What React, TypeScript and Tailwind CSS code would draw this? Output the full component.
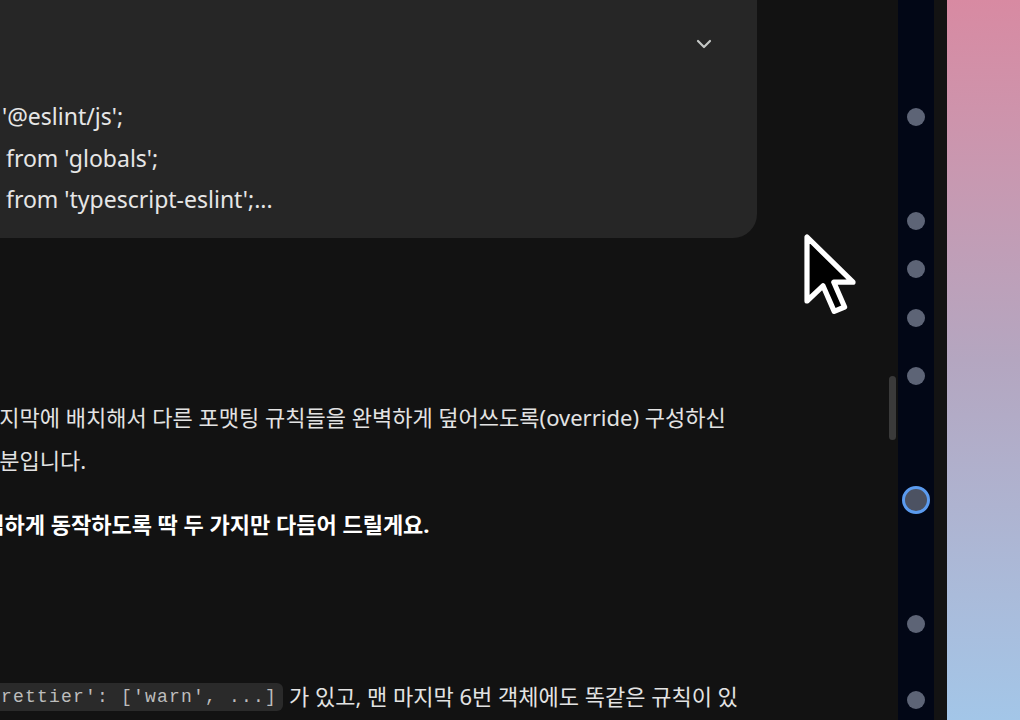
import { ChevronDown } from "lucide-react";

const sans = "font-['Noto_Sans','Noto_Sans_CJK_KR',sans-serif]";

const Dot = ({ className = "" }: { className?: string }) => (
  <div className={`h-[18px] w-[18px] shrink-0 rounded-full bg-[#5d6476] ${className}`} />
);

const Cursor = () => (
  <svg
    className="absolute left-[801px] top-[231px]"
    width="56"
    height="88"
    viewBox="-1.5 -1.5 14 22"
  >
    <path
      d="M0 0 L0 16 L4 12.2 L6.8 18.6 L9.4 17.5 L6.7 11.3 L11.5 11.3 Z"
      fill="#000"
      stroke="#fff"
      strokeWidth="1.3"
      strokeLinejoin="round"
    />
  </svg>
);

const CodeCard = () => (
  <section className="relative h-[238px] w-[757px] shrink-0 rounded-br-[24px] bg-[#262626]">
    <div className="flex h-[88px] items-center justify-end pr-[41px]">
      <ChevronDown size={24} strokeWidth={2.2} className="text-[#c4c7c5]" />
    </div>
    <div className={`mt-[8px] flex flex-col text-[23px] leading-[41.5px] text-[#e6e6e6] ${sans}`}>
      <p className="pl-[2px]">'@eslint/js';</p>
      <p className="pl-[6px]">from 'globals';</p>
      <p className="pl-[6px]">from 'typescript-eslint';...</p>
    </div>
  </section>
);

const Answer = () => (
  <div className={`mt-[158px] flex flex-col whitespace-nowrap text-[22px] leading-[43px] text-[#e3e3e3] ${sans}`}>
    <p className="-ml-[21px]">
      마지막에 배치해서 다른 포맷팅 규칙들을 완벽하게 덮어쓰도록(override) 구성하신
    </p>
    <p className="-ml-[21px]">부분입니다.</p>
    <p className="-ml-[36px] mt-[21px] font-bold text-white">
      완벽하게 동작하도록 딱 두 가지만 다듬어 드릴게요.
    </p>
    <p className="mt-[129px] flex items-center">
      <code className="-ml-[29px] rounded-[6px] bg-[#2a2a2a] px-[6px] font-['Liberation_Mono',monospace] text-[18px] leading-[28px] tracking-[1.2px] text-[#bdbdbd]">
        'prettier': ['warn', ...]
      </code>
      <span className="ml-[6px]">가 있고, 맨 마지막 6번 객체에도 똑같은 규칙이 있</span>
    </p>
  </div>
);

export default function App() {
  return (
    <div className="flex h-[720px] w-[1020px] overflow-hidden bg-[#121212]">
      <main className="relative flex w-[898px] shrink-0 flex-col overflow-hidden">
        <CodeCard />
        <Answer />
        <div className="absolute right-[2px] top-[376px] h-[64px] w-[7px] rounded-full bg-[#3a3a3a]" />
        <Cursor />
      </main>
      <nav className="flex w-[36px] shrink-0 flex-col items-center bg-[#020716] pt-[108px]">
        <Dot />
        <Dot className="mt-[86px]" />
        <Dot className="mt-[30px]" />
        <Dot className="mt-[31px]" />
        <Dot className="mt-[40px]" />
        <div className="mt-[101px] h-[28px] w-[28px] shrink-0 rounded-full border-[3px] border-[#5b9bef] bg-[#4c5262]" />
        <Dot className="mt-[101px]" />
        <Dot className="mt-[58px]" />
      </nav>
      <div className="w-[13px] shrink-0 bg-[#131313]" />
      <div className="flex-1 bg-gradient-to-b from-[#d88aa2] via-[#b4a6c0] to-[#a3c6e8]" />
    </div>
  );
}
